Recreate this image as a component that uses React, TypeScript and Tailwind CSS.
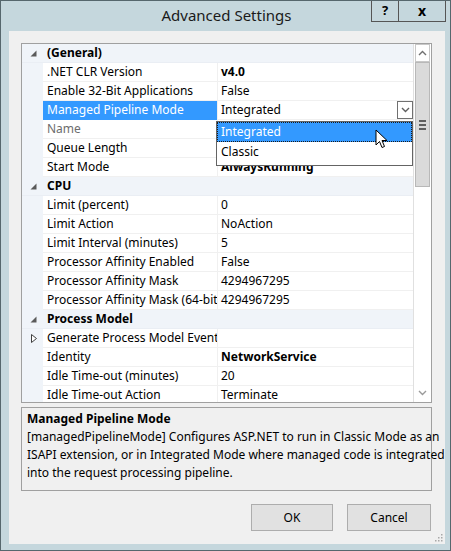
import React from 'react';

type Row =
  | { kind: 'cat'; label: string }
  | { kind: 'prop'; label: string; value?: string; bold?: boolean; muted?: boolean; selected?: boolean; collapsed?: boolean };

// values under the open dropdown list are left empty, the list hides them
const rows: Row[] = [
  { kind: 'cat', label: '(General)' },
  { kind: 'prop', label: '.NET CLR Version', value: 'v4.0', bold: true },
  { kind: 'prop', label: 'Enable 32-Bit Applications', value: 'False' },
  { kind: 'prop', label: 'Managed Pipeline Mode', value: 'Integrated', selected: true },
  { kind: 'prop', label: 'Name', muted: true },
  { kind: 'prop', label: 'Queue Length' },
  { kind: 'prop', label: 'Start Mode', value: 'AlwaysRunning', bold: true },
  { kind: 'cat', label: 'CPU' },
  { kind: 'prop', label: 'Limit (percent)', value: '0' },
  { kind: 'prop', label: 'Limit Action', value: 'NoAction' },
  { kind: 'prop', label: 'Limit Interval (minutes)', value: '5' },
  { kind: 'prop', label: 'Processor Affinity Enabled', value: 'False' },
  { kind: 'prop', label: 'Processor Affinity Mask', value: '4294967295' },
  { kind: 'prop', label: 'Processor Affinity Mask (64-bit option)', value: '4294967295' },
  { kind: 'cat', label: 'Process Model' },
  { kind: 'prop', label: 'Generate Process Model Event Log Entry', collapsed: true },
  { kind: 'prop', label: 'Identity', value: 'NetworkService', bold: true },
  { kind: 'prop', label: 'Idle Time-out (minutes)', value: '20' },
  { kind: 'prop', label: 'Idle Time-out Action', value: 'Terminate' },
];

const Expanded = () => (
  <svg width="7" height="7" viewBox="0 0 7 7">
    <polygon points="6.5,0.5 6.5,6.5 0.5,6.5" fill="#5a5a5a" />
  </svg>
);

const Collapsed = () => (
  <svg width="6" height="9" viewBox="0 0 6 9">
    <polygon points="0.5,0.5 5.5,4.5 0.5,8.5" fill="white" stroke="#404040" strokeWidth="1" />
  </svg>
);

const Chevron = ({ up = false, color = '#606060' }: { up?: boolean; color?: string }) => (
  <svg width="9" height="6" viewBox="0 0 9 6">
    <polyline
      points={up ? '1,5 4.5,1.5 8,5' : '1,1 4.5,4.5 8,1'}
      fill="none"
      stroke={color}
      strokeWidth="1.4"
    />
  </svg>
);

const GridRow: React.FC<{ row: Row }> = ({ row }) => {
  if (row.kind === 'cat') {
    return (
      <div className="flex h-[19px] shrink-0 bg-[#f0f4f9] border-b border-[#eaeef4]">
        <div className="w-[21px] flex items-center justify-center pl-[2px]">
          <Expanded />
        </div>
        <div className="pl-[4px] flex items-center font-bold text-black">{row.label}</div>
      </div>
    );
  }
  return (
    <div className="flex h-[19px] shrink-0">
      <div className="w-[21px] bg-[#f0f4f9] flex items-center justify-center pl-[2px]">
        {row.collapsed && <Collapsed />}
      </div>
      <div
        className={`w-[174px] shrink-0 pl-[4px] flex items-center whitespace-nowrap overflow-hidden border-b ${
          row.selected ? 'bg-[#3399ff] text-white border-[#3399ff]' : row.muted ? 'text-[#6d6d6d] border-[#f0f0f0]' : 'text-black border-[#f0f0f0]'
        }`}
      >
        {row.label}
      </div>
      <div className="w-px bg-[#f0f0f0]" />
      <div
        className={`flex-1 pl-[3px] flex items-center whitespace-nowrap overflow-hidden border-b border-[#f0f0f0] text-black ${
          row.bold ? 'font-bold' : ''
        }`}
      >
        <span className="flex-1">{row.value}</span>
        {row.selected && (
          <div className="w-[16px] h-[18px] border border-[#707070] bg-white flex items-center justify-center">
            <Chevron />
          </div>
        )}
      </div>
    </div>
  );
};

const App: React.FC = () => {
  return (
    <div className="w-[451px] h-[551px] bg-[#c5d7dd] border border-[#56676d] flex flex-col font-['Segoe_UI','Noto_Sans',sans-serif] text-[12px] text-black overflow-hidden">
      {/* Title bar */}
      <div className="relative h-[30px] shrink-0 flex items-center justify-center">
        <span className="text-[15px] text-[#1a1a1a] pl-[2px] -mt-[1px]">Advanced Settings</span>
        <div className="absolute right-[4px] top-[-1px] flex h-[22px]">
          <div className="w-[28px] border border-[#555] border-t-0 flex items-center justify-center font-bold text-[13px]">?</div>
          <div className="w-[47px] border border-[#555] border-t-0 border-l-0 flex items-center justify-center font-bold text-[14px]">x</div>
        </div>
      </div>

      {/* Client area */}
      <div className="relative flex-1 ml-[8px] mr-[5px] mb-[6px] bg-[#f0f0f0] pl-[12px] pt-[12px] flex flex-col">
        {/* Property grid */}
        <div className="relative w-[411px] h-[360px] border border-[#a0a0a0] bg-white flex">
          <div className="flex-1 flex flex-col overflow-hidden">
            {rows.map((r, i) => (
              <GridRow key={i} row={r} />
            ))}
          </div>
          {/* Scrollbar */}
          <div className="w-[18px] flex flex-col border-l border-[#e0e0e0] bg-white">
            <div className="h-[18px] mx-[1px] border border-[#c8c8c8] flex items-center justify-center bg-white">
              <Chevron up color="#707070" />
            </div>
            <div className="h-[125px] mx-[1px] bg-[#dadada] border border-[#b8b8b8] flex items-center justify-center">
              <div className="flex flex-col gap-[2px]">
                <div className="w-[7px] h-[2px] bg-[#606060]" />
                <div className="w-[7px] h-[2px] bg-[#606060]" />
                <div className="w-[7px] h-[2px] bg-[#606060]" />
              </div>
            </div>
            <div className="flex-1" />
            <div className="h-[18px] mx-[1px] flex items-center justify-center">
              <Chevron color="#9a9a9a" />
            </div>
          </div>

          {/* Dropdown list */}
          <div className="absolute left-[194px] top-[77px] w-[197px] h-[45px] bg-white border border-[#646464] flex flex-col">
            <div className="h-[20px] bg-[#3399ff] text-white pl-[3px] flex items-center border border-dotted border-[#1a1a1a]">
              Integrated
            </div>
            <div className="h-[19px] pl-[4px] flex items-center text-black">Classic</div>
          </div>

          {/* Mouse cursor */}
          <svg className="absolute left-[353px] top-[85px]" width="14" height="22" viewBox="0 0 14 22">
            <path
              d="M1 1 L1 16 L4.5 12.5 L7 18.5 L9.5 17.5 L7 11.5 L12 11.5 Z"
              fill="white"
              stroke="black"
              strokeWidth="1"
              strokeLinejoin="miter"
            />
          </svg>
        </div>

        {/* Description */}
        <div className="w-[411px] h-[84px] mt-[4px] border border-[#a0a0a0] bg-[#f0f0f0] px-[5px] pt-[2px] leading-[18px] whitespace-nowrap">
          <div className="font-bold">Managed Pipeline Mode</div>
          <div>[managedPipelineMode] Configures ASP.NET to run in Classic Mode as an</div>
          <div>ISAPI extension, or in Integrated Mode where managed code is integrated</div>
          <div>into the request processing pipeline.</div>
        </div>

        {/* Buttons */}
        <div className="w-[411px] mt-[13px] flex justify-end gap-[14px] pr-[1px]">
          <button className="w-[82px] h-[27px] bg-[#e1e1e1] border border-[#adadad] text-black">OK</button>
          <button className="w-[84px] h-[27px] bg-[#e1e1e1] border border-[#adadad] text-black">Cancel</button>
        </div>

        {/* Size grip */}
        <svg className="absolute right-[2px] bottom-[2px]" width="8" height="8" viewBox="0 0 8 8">
          <rect x="6" y="0" width="1.5" height="1.5" fill="#a8a8a8" />
          <rect x="3" y="3" width="1.5" height="1.5" fill="#a8a8a8" />
          <rect x="6" y="3" width="1.5" height="1.5" fill="#a8a8a8" />
          <rect x="0" y="6" width="1.5" height="1.5" fill="#a8a8a8" />
          <rect x="3" y="6" width="1.5" height="1.5" fill="#a8a8a8" />
          <rect x="6" y="6" width="1.5" height="1.5" fill="#a8a8a8" />
        </svg>
      </div>
    </div>
  );
};

export default App;
